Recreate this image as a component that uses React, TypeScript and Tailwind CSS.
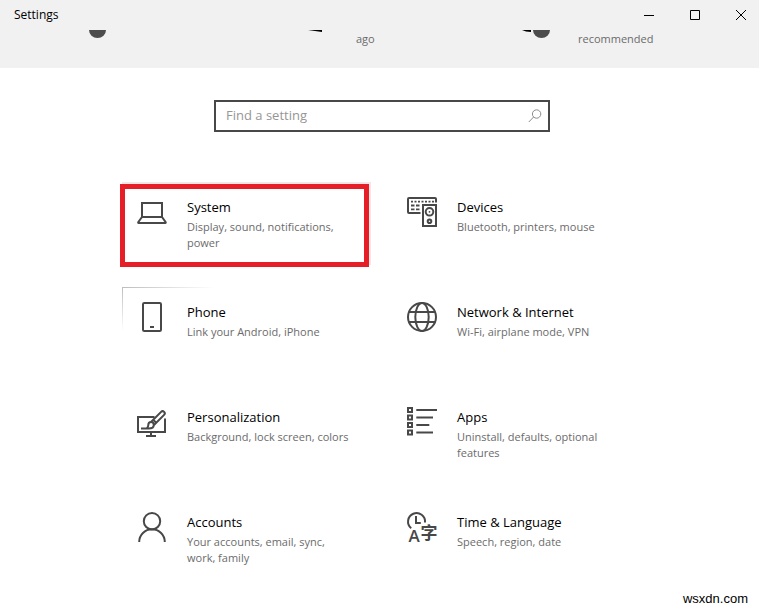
import type { ReactNode } from "react";

type Tile = {
  title: string;
  text: string;
  icon: ReactNode;
  marked?: boolean;
  lit?: boolean;
};

const Icon = ({ children }: { children: ReactNode }) => (
  <svg
    viewBox="0 0 30 30"
    fill="none"
    stroke="currentColor"
    strokeWidth="2"
    aria-hidden="true"
    className="size-[30px] shrink-0 overflow-visible text-[#484848]"
  >
    {children}
  </svg>
);

const tiles: Tile[] = [
  {
    title: "System",
    text: "Display, sound, notifications, power",
    marked: true,
    icon: (
      <Icon>
        <path d="M5 20V6h20v14M5 20h20l3.7 5.2c.2.4 0 .8-.4.8H1.6c-.4 0-.6-.4-.4-.8z" />
      </Icon>
    ),
  },
  {
    title: "Devices",
    text: "Bluetooth, printers, mouse",
    icon: (
      <Icon>
        <path d="M29 5.5V2c0-.6-.4-1-1-1H2c-.6 0-1 .4-1 1v13c0 .6.4 1 1 1h11.5" />
        <path d="M4 4.7h23" strokeWidth="1.8" strokeDasharray="2 1.5" />
        <path d="M4 8.5h9M4 12.3h9" strokeWidth="1.8" strokeDasharray="3.5 1.5" />
        <rect x="16" y="8" width="13" height="21" />
        <circle cx="22.5" cy="14.8" r="3.8" />
        <circle cx="22.5" cy="14.8" r="0.9" fill="currentColor" stroke="none" />
        <circle cx="22.5" cy="24.2" r="1.8" />
      </Icon>
    ),
  },
  {
    title: "Phone",
    text: "Link your Android, iPhone",
    lit: true,
    icon: (
      <Icon>
        <rect x="6" y="1" width="18" height="28" rx="1.3" />
        <path d="M13 25h4" />
      </Icon>
    ),
  },
  {
    title: "Network & Internet",
    text: "Wi-Fi, airplane mode, VPN",
    icon: (
      <Icon>
        <circle cx="15" cy="15" r="14" />
        <ellipse cx="15" cy="15" rx="6.7" ry="14" />
        <path d="M2 10h26M2 20h26" />
      </Icon>
    ),
  },
  {
    title: "Personalization",
    text: "Background, lock screen, colors",
    icon: (
      <Icon>
        <path d="M17.5 10H1v15h27V11.5M14 25v4M9 29h10" />
        <path d="M4 21.4h7.5c3 0 5.3-1.2 5.3-3.5 0-1.7-1.2-2.8-2.7-2.8-1.7 0-2.8 1.2-2.8 2.9 0 1.5-.5 2.6-1.6 3.3" />
        <path d="M14 15 24.1 4.9a2.1 2.1 0 0 1 3 3L17 18M16.2 12.8l3.2 3.2" />
      </Icon>
    ),
  },
  {
    title: "Apps",
    text: "Uninstall, defaults, optional features",
    icon: (
      <Icon>
        <path d="M1 1h4v4H1zM1 8.5h4v4H1zM1 16h4v4H1zM1 23.5h4v4H1z" />
        <path d="M9.3 3H30M9.3 10.5H26M9.3 18h13M9.3 25.5H26" />
      </Icon>
    ),
  },
  {
    title: "Accounts",
    text: "Your accounts, email, sync, work, family",
    icon: (
      <Icon>
        <circle cx="15" cy="9.2" r="8.2" />
        <path d="M2.2 30a12.8 12.8 0 0 1 25.6 0" />
      </Icon>
    ),
  },
  {
    title: "Time & Language",
    text: "Speech, region, date",
    icon: (
      <Icon>
        <path d="M4.2 16.2A8.5 8.5 0 1 1 18 10.5M9 4v7h4.8" />
        <text
          x="1.5"
          y="30"
          fill="currentColor"
          stroke="none"
          className="font-['Open_Sans',sans-serif] text-[17px] font-semibold"
        >
          A
        </text>
        <text
          x="13.5"
          y="27"
          fill="currentColor"
          stroke="none"
          className="font-['Noto_Sans_CJK_SC',sans-serif] text-[17px] font-bold"
        >
          字
        </text>
      </Icon>
    ),
  },
];

const TitleBar = () => (
  <div className="flex h-[30px] items-center justify-between pl-[14px]">
    <h1 className="text-xs">Settings</h1>
    <div className="flex h-7 gap-[10px]">
      <button aria-label="Minimize" className="flex w-9 items-center justify-center">
        <svg viewBox="0 0 10 10" stroke="currentColor" className="size-[10px]">
          <path d="M0 5.5h10" />
        </svg>
      </button>
      <button aria-label="Maximize" className="flex w-9 items-center justify-center">
        <svg viewBox="0 0 10 10" fill="none" stroke="currentColor" className="size-[10px]">
          <path d="M.5.5h9v9h-9z" />
        </svg>
      </button>
      <button aria-label="Close" className="flex w-9 items-center justify-center">
        <svg viewBox="0 0 10 10" stroke="currentColor" className="size-[10px]">
          <path d="M0 0l10 10M10 0 0 10" />
        </svg>
      </button>
    </div>
  </div>
);

// Lower edge of the status row, scrolled up under the title bar
const StatusRow = () => (
  <div className="grid h-[38px] grid-cols-[222px_222px_auto] pl-[77px] text-[11px] leading-[18px] text-[#6b6b6b]">
    <div className="flex">
      <svg viewBox="0 0 30 8" className="h-2 w-[30px] text-[#4c4c4c]">
        <path d="M12 0h17a8.5 8 0 0 1-17 0z" fill="currentColor" />
      </svg>
    </div>
    <div className="flex">
      <svg viewBox="0 0 30 8" className="h-2 w-[30px]">
        <path d="M9 0h14v2z" fill="#000" />
      </svg>
      <span className="ml-[27px]">ago</span>
    </div>
    <div className="flex">
      <svg viewBox="0 0 30 8" className="h-2 w-[30px]">
        <path d="M1 0h9v2L5 1.6z" fill="#000" />
        <path d="M12 0h17a8.5 8 0 0 1-17 0z" fill="#4c4c4c" />
      </svg>
      <span className="ml-[27px]">recommended</span>
    </div>
  </div>
);

const SearchBox = () => (
  <div className="mx-auto flex h-8 w-[336px] items-center border-2 border-[#484848] pr-1.5 pl-2.5">
    <input
      type="search"
      aria-label="Find a setting"
      placeholder="Find a setting"
      className="min-w-0 flex-1 text-[13px] outline-none placeholder:text-[#969696]"
    />
    <svg
      viewBox="0 0 14 14"
      fill="none"
      stroke="currentColor"
      aria-hidden="true"
      className="size-[14px] text-[#8c8c8c]"
    >
      <circle cx="8.6" cy="5" r="4.2" />
      <path d="M5.6 8 .8 13" />
    </svg>
  </div>
);

const SettingTile = ({ title, text, icon, marked, lit }: Tile) => (
  <a href="#" className="relative flex h-[84px] pt-[15px] pr-5 pl-[15px]">
    {marked && (
      <span className="absolute top-0.5 right-[3px] -bottom-px -left-0.5 border-5 border-[#e61e28] shadow-[2px_-2px_0_#f5e6e8]" />
    )}
    {lit && (
      <>
        <span className="absolute top-0 left-0 h-px w-[92px] bg-linear-to-r from-[#bdbdbd] to-white" />
        <span className="absolute top-0 left-0 h-11 w-px bg-linear-to-b from-[#bdbdbd] to-white" />
      </>
    )}
    {icon}
    <span className="ml-5 flex flex-col gap-0.5">
      <span className="text-[13px] leading-5 text-black">{title}</span>
      <span className="text-[11px] leading-4 text-[#6b6b6b]">{text}</span>
    </span>
  </a>
);

export default function App() {
  return (
    <div className="min-h-screen bg-white font-['Open_Sans','Noto_Sans',sans-serif] text-black">
      <header className="bg-[#f1f1f1]">
        <TitleBar />
        <StatusRow />
      </header>
      <main className="pt-8 pl-[5px]">
        <SearchBox />
        <nav
          aria-label="Settings categories"
          className="mx-auto mt-[50px] grid max-w-[520px] grid-cols-2 gap-x-5 gap-y-[21px]"
        >
          {tiles.map((tile) => (
            <SettingTile key={tile.title} {...tile} />
          ))}
        </nav>
      </main>
      <footer className="mt-2 pr-[11px] text-right font-['Liberation_Sans',sans-serif] text-[13px] leading-5">
        wsxdn.com
      </footer>
    </div>
  );
}
